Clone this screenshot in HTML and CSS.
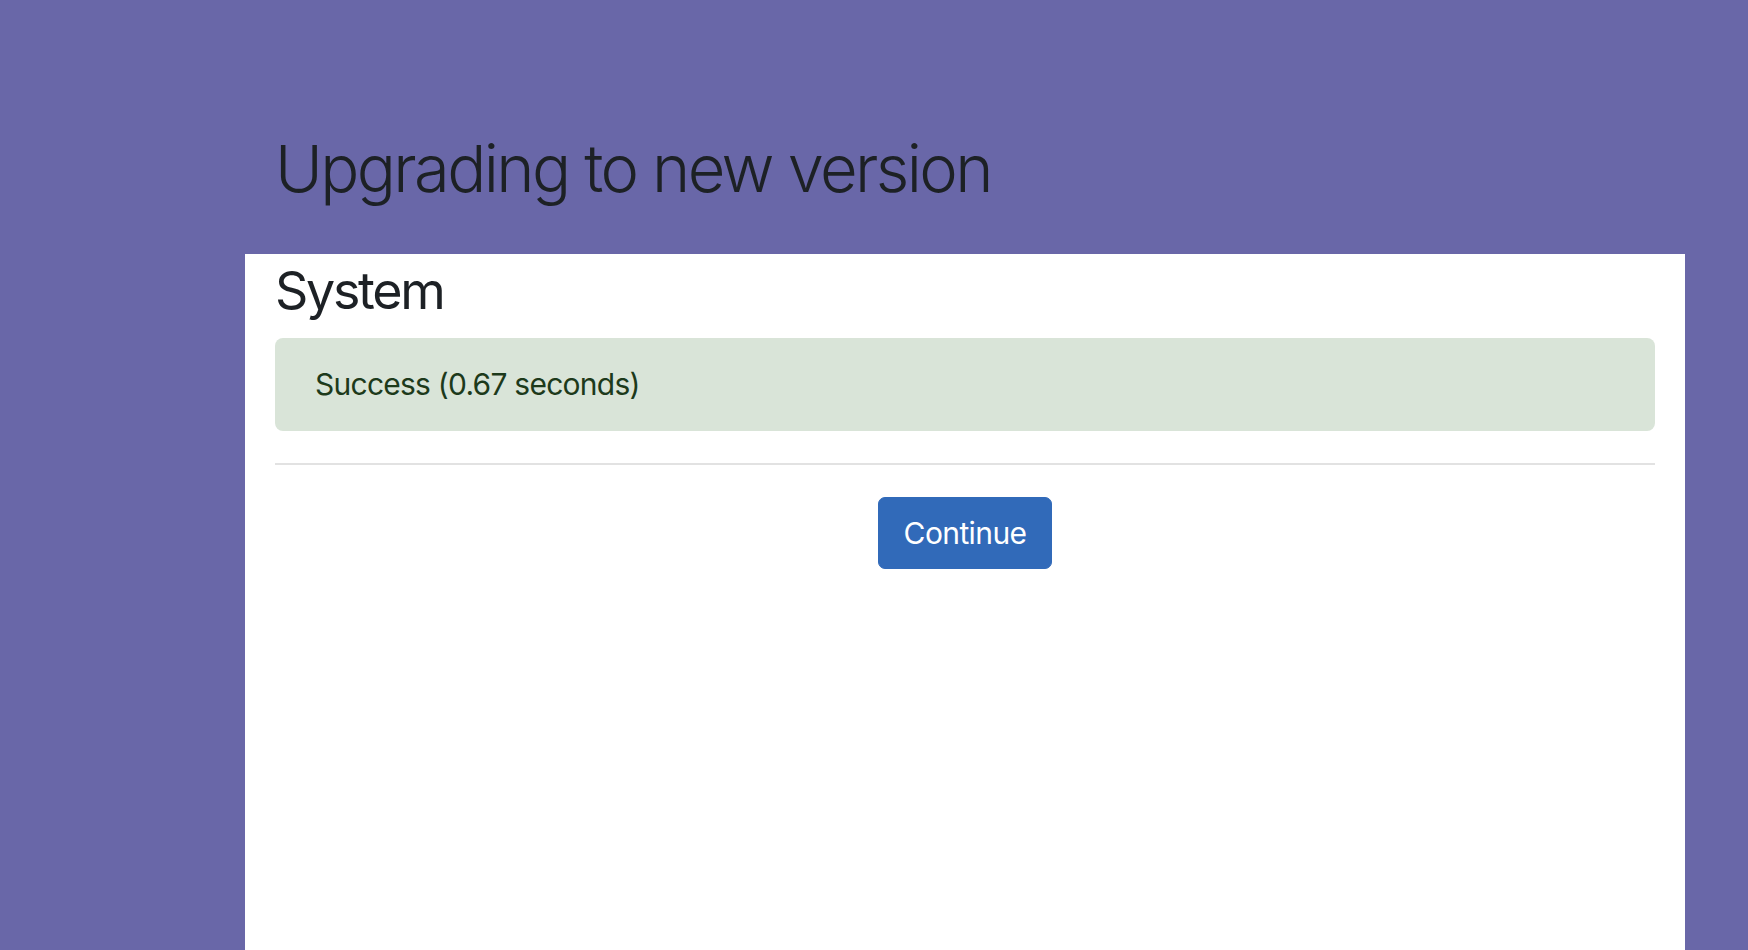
FILE: index.html
```html
<!DOCTYPE html>
<html lang="en">
<head>
    <meta charset="UTF-8">
    <meta name="viewport" content="width=device-width, initial-scale=1.0">
    <title>Upgrading to new version</title>
    <link rel="stylesheet" href="styles.css">
</head>
<body>
    <div class="page">
        <div class="page-header">
            <h1 class="page-title">Upgrading to new version</h1>
        </div>

        <div class="region-main">
            <h2 class="section-title">System</h2>

            <div class="alert alert-success">Success (0.67 seconds)</div>

            <hr class="divider">

            <div class="button-row">
                <button class="button" type="button">Continue</button>
            </div>
        </div>
    </div>
</body>
</html>
```

FILE: styles.css
```css
body {
    font-family: Inter, "Noto Sans", sans-serif;
    background-color: #6967a8;
    color: #1d2125;
    margin: 0;
    padding: 0;
}

.page {
    width: 1440px;
    margin-left: 245px;
    min-height: 950px;
    display: flex;
    flex-direction: column;
}

.page-header {
    padding: 130px 30px 0;
    margin-bottom: 46px;
}

.page-title {
    font-size: 65px;
    font-weight: 300;
    line-height: 1.2;
    letter-spacing: -0.04em;
    margin: 0;
    color: #1d2125;
}

.region-main {
    flex: 1;
    background-color: #ffffff;
    padding: 6px 30px 30px;
}

.section-title {
    font-size: 52px;
    font-weight: 400;
    line-height: 1.2;
    letter-spacing: -0.045em;
    margin: 0 0 16px;
}

.alert {
    padding: 24px 40px;
    border-radius: 8px;
    font-size: 30px;
    line-height: 1.5;
    letter-spacing: -0.025em;
}

.alert-success {
    background-color: #d9e4d8;
    color: #1d3a1b;
}

.divider {
    border: 0;
    border-top: 2px solid #e2e2e2;
    margin: 32px 0;
}

.button-row {
    text-align: center;
}

.button {
    background-color: #316ab9;
    color: #ffffff;
    border: 1px solid #316ab9;
    padding: 12px 25px;
    font-family: inherit;
    font-size: 30px;
    line-height: 46px;
    letter-spacing: -0.02em;
    border-radius: 7px;
    cursor: pointer;
}

.button:hover {
    background-color: #295a9e;
}
```
